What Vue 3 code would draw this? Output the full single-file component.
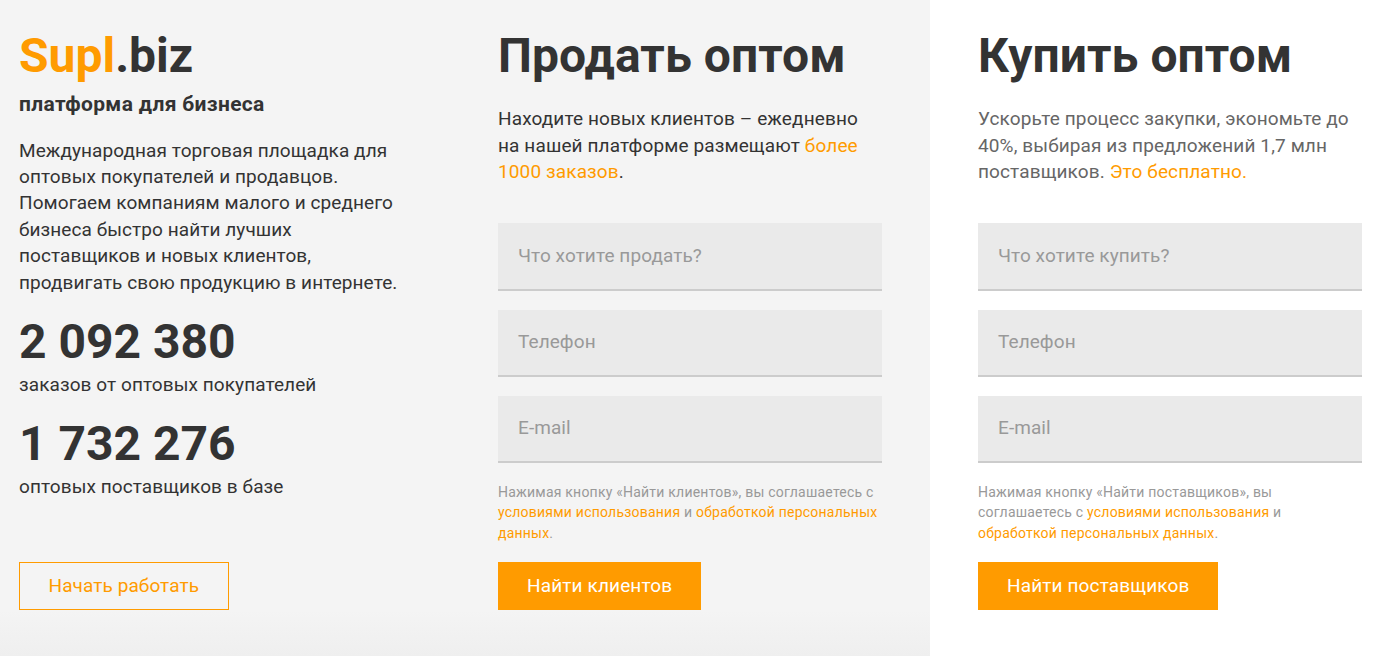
<script setup>
const forms = [
  { title: 'Продать оптом', ph: 'Что хотите продать?', btn: 'Найти клиентов', kind: 'sell' },
  { title: 'Купить оптом', ph: 'Что хотите купить?', btn: 'Найти поставщиков', kind: 'buy' }
]
</script>

<template>
  <div class="page">
    <div class="grey">
      <section class="col first">
        <div class="logo"><span class="or">Supl</span>.biz</div>
        <div class="tag">платформа для бизнеса</div>
        <p class="about">Международная торговая площадка для оптовых покупателей и продавцов. Помогаем компаниям малого и среднего бизнеса быстро найти лучших поставщиков и новых клиентов, продвигать свою продукцию в интернете.</p>
        <div class="num">2 092 380</div>
        <div class="cap">заказов от оптовых покупателей</div>
        <div class="num second">1 732 276</div>
        <div class="cap">оптовых поставщиков в базе</div>
        <a class="btn outline">Начать работать</a>
      </section>
      <section class="col">
        <h1>{{ forms[0].title }}</h1>
        <p class="lead dark">Находите новых клиентов – ежедневно на нашей платформе размещают <span class="or">более 1000 заказов</span>.</p>
        <div class="field">{{ forms[0].ph }}</div>
        <div class="field">Телефон</div>
        <div class="field">E-mail</div>
        <p class="terms">Нажимая кнопку «Найти клиентов», вы соглашаетесь с <span class="or">условиями использования</span> и <span class="or">обработкой персональных данных</span>.</p>
        <a class="btn solid">{{ forms[0].btn }}</a>
      </section>
    </div>
    <section class="col white">
      <h1>{{ forms[1].title }}</h1>
      <p class="lead">Ускорьте процесс закупки, экономьте до 40%, выбирая из предложений 1,7 млн поставщиков. <span class="or">Это бесплатно.</span></p>
      <div class="field">{{ forms[1].ph }}</div>
      <div class="field">Телефон</div>
      <div class="field">E-mail</div>
      <p class="terms">Нажимая кнопку «Найти поставщиков», вы соглашаетесь с <span class="or">условиями использования</span> и <span class="or">обработкой персональных данных</span>.</p>
      <a class="btn solid">{{ forms[1].btn }}</a>
    </section>
  </div>
</template>

<style>
html, body { margin: 0; background: #fff; overflow: hidden; }
</style>

<style scoped>
.page {
  display: flex;
  width: 1377px;
  height: 656px;
  overflow: hidden;
  font-family: Roboto, "Liberation Sans", sans-serif;
  color: #333;
}
.grey {
  display: flex;
  width: 930px;
  height: 656px;
  background: linear-gradient(to bottom, #f4f4f4 0, #f4f4f4 610px, #efefef 656px);
}
.col { width: 384px; padding-top: 28px; display: flex; flex-direction: column; align-items: flex-start; }
.first { width: 380px; margin-left: 19px; margin-right: 99px; }
.white { margin-left: 48px; }
.or { color: #ff9b00; }
.logo { font-size: 48px; font-weight: 700; line-height: 56px; }
.tag { font-size: 21px; font-weight: 700; line-height: 24px; margin-top: 8px; letter-spacing: 0.35px; }
.about { font-size: 19px; line-height: 26.4px; margin: 21.6px 0 0; letter-spacing: 0.08px; }
.num { font-size: 48px; font-weight: 700; line-height: 56px; margin-top: 18px; }
.cap { font-size: 19px; line-height: 26px; margin-top: 2px; letter-spacing: 0.08px; }
h1 { font-size: 48px; font-weight: 700; line-height: 56px; margin: 0; letter-spacing: 0.08px; }
.lead { width: 378px; font-size: 19px; line-height: 26.6px; margin: 22px 0 0; color: #666; letter-spacing: 0.12px; }
.lead.dark { color: #333; }
.field {
  box-sizing: border-box;
  width: 384px;
  height: 67.2px;
  margin-bottom: 19.2px;
  padding: 0 20px 1.5px;
  display: flex;
  align-items: center;
  background: #eaeaea;
  border-bottom: 2px solid #ccc;
  font-size: 19px;
  letter-spacing: 0.08px;
  color: #999;
}
.lead + .field { margin-top: 37.6px; }
.terms { font-size: 14px; line-height: 20.5px; margin: -0.6px 0 0; color: #999; letter-spacing: 0.22px; }
.btn {
  box-sizing: border-box;
  height: 48px;
  display: flex;
  align-items: center;
  justify-content: center;
  font-size: 19px;
  letter-spacing: 0.14px;
  padding: 0 29px 1px;
  margin-top: 18.6px;
}
.outline { border: 1px solid #ff9b00; color: #ff9b00; margin-top: 62px; padding: 0 28.5px 1px; letter-spacing: 0.08px; }
.solid { background: #ff9b00; color: #fff; }
</style>
